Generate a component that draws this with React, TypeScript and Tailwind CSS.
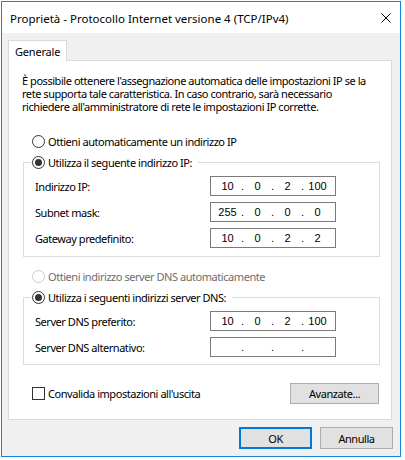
import React from 'react';

const Radio = ({ checked, disabled }: { checked?: boolean; disabled?: boolean }) => (
  <span
    className={`flex h-[13px] w-[13px] shrink-0 items-center justify-center rounded-full border bg-white ${
      disabled ? 'border-[#cccccc]' : 'border-[#333333]'
    }`}
  >
    {checked && <span className="h-[7px] w-[7px] rounded-full bg-[#333333]" />}
  </span>
);

const IpBox = ({ parts }: { parts: string[] }) => (
  <div className="flex h-[20px] w-[126px] items-center border border-[#7a7a7a] bg-white pl-[4px] font-['Liberation_Sans',sans-serif] text-[11px] leading-none tracking-normal">
    {parts.map((p, i) => (
      <React.Fragment key={i}>
        {i > 0 && <span className="w-[5px] text-center">.</span>}
        <span className="w-[25px] text-center">{p}</span>
      </React.Fragment>
    ))}
  </div>
);

const Field = ({ label, parts }: { label: string; parts: string[] }) => (
  <div className="flex h-[20px] items-center pl-[11px]">
    <span className="w-[175px]">{label}</span>
    <IpBox parts={parts} />
  </div>
);

const Group = ({ legend, children, bottom }: { legend: string; children: React.ReactNode; bottom: string }) => (
  <fieldset className={`ml-[14px] mt-[5px] w-[357px] border border-[#dcdcdc] ${bottom}`}>
    <legend className="ml-[7px] flex h-[16px] items-center gap-[3px] pl-[1px] pr-[6px]">
      <Radio checked />
      <span>{legend}</span>
    </legend>
    <div className="flex flex-col gap-[6px] pt-[6px]">{children}</div>
  </fieldset>
);

const Button = ({ children, primary, className }: { children: React.ReactNode; primary?: boolean; className: string }) => (
  <div
    className={`flex items-center justify-center bg-[#e1e1e1] ${
      primary ? 'border-2 border-[#0078d7]' : 'border border-[#adadad]'
    } ${className}`}
  >
    {children}
  </div>
);

export default function App() {
  return (
    <div className="h-[460px] w-[405px] bg-white pl-[1px] pt-[1px] font-['Noto_Sans',sans-serif] text-[11px] leading-[13px] text-black">
      <div className="flex h-[456px] w-[400px] flex-col border border-[#1883d7] bg-[#f0f0f0]">
        {/* title bar */}
        <div className="flex h-[31px] shrink-0 items-center justify-between bg-white pl-[8px] pr-[9px] pt-px text-[11.5px]">
          <span>Proprietà - Protocollo Internet versione 4 (TCP/IPv4)</span>
          <svg width="10" height="10" viewBox="0 0 10 10" className="text-black">
            <path d="M0.5 0.5L9.5 9.5M9.5 0.5L0.5 9.5" stroke="currentColor" strokeWidth="1" />
          </svg>
        </div>

        <div className="flex flex-col pl-[6px] pt-[7px] tracking-[-0.45px]">
          <div className="relative z-10 -mb-px flex h-[21px] w-[59px] items-center border border-b-0 border-[#d9d9d9] bg-white pl-[6px] tracking-[-0.2px]">
            Generale
          </div>

          <div className="flex h-[360px] w-[384px] flex-col border border-[#d9d9d9] bg-white">
            <p className="whitespace-nowrap pl-[13px] pt-[13px]">
              È possibile ottenere l'assegnazione automatica delle impostazioni IP se la
              <br />
              rete supporta tale caratteristica. In caso contrario, sarà necessario
              <br />
              richiedere all'amministratore di rete le impostazioni IP corrette.
            </p>

            <div className="ml-[23px] mt-[20px] flex h-[16px] items-center gap-[3px]">
              <Radio />
              <span>Ottieni automaticamente un indirizzo IP</span>
            </div>

            <Group legend="Utilizza il seguente indirizzo IP:" bottom="pb-[8px]">
              <Field label="Indirizzo IP:" parts={['10', '0', '2', '100']} />
              <Field label="Subnet mask:" parts={['255', '0', '0', '0']} />
              <Field label="Gateway predefinito:" parts={['10', '0', '2', '2']} />
            </Group>

            <div className="ml-[23px] mt-[11px] flex h-[16px] items-center gap-[3px] text-[#6d6d6d]">
              <Radio disabled />
              <span>Ottieni indirizzo server DNS automaticamente</span>
            </div>

            <Group legend="Utilizza i seguenti indirizzi server DNS:" bottom="pb-[7px]">
              <Field label="Server DNS preferito:" parts={['10', '0', '2', '100']} />
              <Field label="Server DNS alternativo:" parts={['', '', '', '']} />
            </Group>

            <div className="ml-[23px] mt-[18px] flex w-[347px] items-center justify-between">
              <div className="flex items-center gap-[3px]">
                <span className="h-[13px] w-[13px] border border-[#333333] bg-white" />
                <span>Convalida impostazioni all'uscita</span>
              </div>
              <Button className="h-[21px] w-[89px]">Avanzate...</Button>
            </div>
          </div>

          <div className="mt-[7px] flex justify-end gap-[8px] pr-[7px]">
            <Button primary className="h-[22px] w-[73px]">
              OK
            </Button>
            <Button className="h-[22px] w-[73px]">Annulla</Button>
          </div>
        </div>
      </div>
    </div>
  );
}
